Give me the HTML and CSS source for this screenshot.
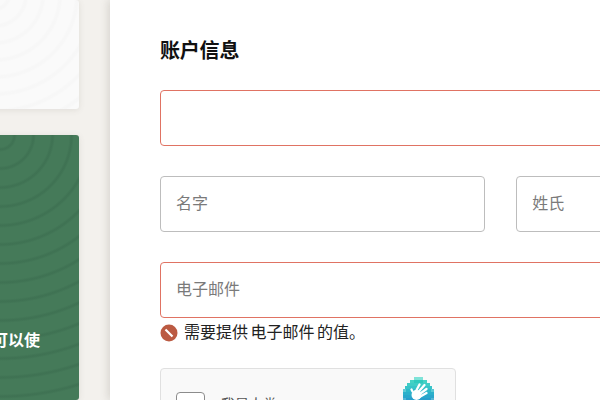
FILE: index.html
```html
<!DOCTYPE html>
<html lang="zh">
<head>
<meta charset="utf-8">
<title>账户信息</title>
<link rel="stylesheet" href="styles.css">
</head>
<body>
<div class="page">
  <aside class="sidebar">
    <div class="card card-light"></div>
    <div class="card card-green"><p class="promo">可以使</p></div>
  </aside>
  <main class="panel">
    <h2 class="title">账户信息</h2>
    <div class="fields">
      <input class="field field-error" type="text">
      <div class="row">
        <input class="field" type="text" placeholder="名字">
        <input class="field" type="text" placeholder="姓氏">
      </div>
      <div class="email">
        <input class="field field-error" type="text" placeholder="电子邮件">
        <p class="error">
          <svg class="error-icon" viewBox="0 0 18 18" width="18" height="18" aria-hidden="true">
            <circle cx="9" cy="9" r="8.500" fill="#bb5a42"/>
            <path d="M5.500 5.500 12.500 12.500" stroke="#fff" stroke-width="2.200"/>
          </svg>
          <span>需要提供 电子邮件 的值。</span>
        </p>
      </div>
      <div class="captcha">
        <span class="check"></span>
        <span class="captcha-label">我是人类</span>
        <svg class="captcha-logo" viewBox="0 0 31 32" width="31" height="32" aria-hidden="true">
          <rect x="11" y="0" width="9" height="3" fill="#7fe3d8"/>
          <rect x="7" y="3" width="17" height="3" fill="#45d2c5"/>
          <rect x="11" y="3" width="9" height="3" fill="#2fcabd"/>
          <rect x="4" y="6" width="23" height="3" fill="#3fcdc6"/>
          <rect x="2" y="9" width="27" height="3" fill="#38c4c8"/>
          <rect x="0" y="12" width="31" height="3" fill="#5cc9d4"/>
          <rect x="3" y="12" width="25" height="3" fill="#2eb9c9"/>
          <rect x="0" y="15" width="31" height="3" fill="#2cb0ca"/>
          <rect x="0" y="18" width="31" height="3" fill="#2aa7cb"/>
          <rect x="0" y="21" width="31" height="3" fill="#55b6d6"/>
          <rect x="3" y="21" width="25" height="3" fill="#289ecc"/>
          <rect x="3" y="24" width="25" height="3" fill="#2696cc"/>
          <rect x="6" y="27" width="19" height="3" fill="#2590cc"/>
          <circle cx="13.500" cy="18" r="5" fill="#fff"/>
          <g stroke="#fff" stroke-width="2.300" stroke-linecap="round" fill="none">
            <path d="M9.500 14.500 8.500 12.500"/>
            <path d="M12.500 15 16.500 7.500"/>
            <path d="M14.500 16 21.500 8"/>
            <path d="M16 17.500 23.500 12"/>
            <path d="M16.500 20 23.500 16"/>
          </g>
        </svg>
      </div>
    </div>
  </main>
</div>
</body>
</html>
```
FILE: styles.css
```css
* { box-sizing: border-box; }
html, body { margin: 0; height: 100%; overflow: hidden; }
body {
  background: #f3f1ed;
  font-family: "Liberation Sans", "Noto Sans CJK SC", sans-serif;
  color: #1c1c1c;
}
.page { display: flex; width: 1100px; height: 400px; margin-left: -200px; }
.sidebar {
  flex: none;
  width: 279px;
  margin-right: 31px;
  display: flex;
  flex-direction: column;
  gap: 26px;
}
.card { border-radius: 3px; box-shadow: 0 1px 6px rgba(90, 85, 70, .12); }
.card-light {
  height: 109px;
  background-color: #fafafa;
  background-image: repeating-radial-gradient(circle at 195px -5px, rgba(0,0,0,0) 0 11px, rgba(0,0,0,.012) 13px 15px, rgba(0,0,0,0) 17px);
}
.card-green {
  flex: 1;
  background-color: #457a59;
  background-image: repeating-radial-gradient(circle at 200px 0, rgba(30,70,50,0) 0 12px, rgba(30,70,50,.14) 14px 15px, rgba(30,70,50,0) 17px 19px);
  padding-top: 194px;
  padding-right: 39px;
}
.promo {
  margin: 0;
  text-align: right;
  color: #fff;
  font-size: 16px;
  font-weight: 700;
  line-height: 24px;
}
.panel {
  flex: none;
  width: 790px;
  background: #fff;
  padding: 37px 50px 0;
  box-shadow: -2px 0 8px rgba(90, 85, 70, .18);
}
.title { margin: 0 0 25px; font-size: 20px; line-height: 28px; font-weight: 700; color: #111; letter-spacing: -.2px; }
.fields { display: flex; flex-direction: column; gap: 30px; width: 681px; }
.row { display: flex; gap: 31.500px; }
.row .field { width: 325px; }
.field {
  display: block;
  width: 100%;
  height: 56px;
  padding: 0 15px;
  background: #fff;
  border: 1px solid #bdbdbd;
  border-radius: 4px;
  font: 16px "Liberation Sans", "Noto Sans CJK SC", sans-serif;
  outline: none;
}
.field::placeholder { color: #7a7a7a; opacity: 1; }
.field-error { border-color: #e07363; }
.email { display: flex; flex-direction: column; }
.error {
  margin: 3px 0 0;
  height: 24px;
  display: flex;
  align-items: center;
  gap: 6px;
  font-size: 16px;
  line-height: 24px;
  color: #222;
  word-spacing: -2px;
}
.error-icon { flex: none; }
.captcha {
  display: flex;
  align-items: flex-start;
  width: 296px;
  height: 74px;
  margin-top: -7px;
  padding: 23px 21px 0 15px;
  background: #f9f9f9;
  border: 1px solid #e0e0e0;
  border-radius: 4px;
  position: relative;
}
.check {
  flex: none;
  width: 29px;
  height: 30px;
  background: #fff;
  border: 1px solid #8c8c8c;
  border-radius: 4px;
}
.captcha-label { margin-left: 16px; margin-top: 2px; font-size: 14px; line-height: 20px; color: #555; }
.captcha-logo { position: absolute; top: 8px; left: 242px; }
```
